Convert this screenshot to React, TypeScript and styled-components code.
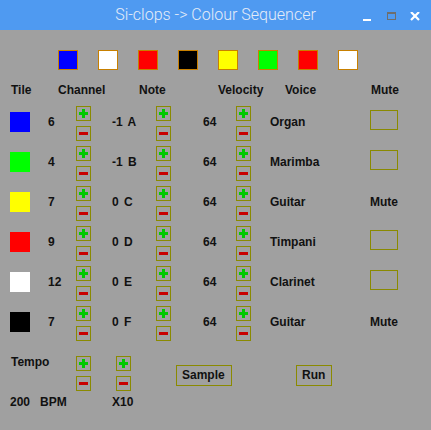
import { createGlobalStyle } from "styled-components";
import styled from "styled-components";

const palette = ["#0000ff", "#ffffff", "#ff0000", "#000000", "#ffff00", "#00ff00", "#ff0000", "#ffffff"];

const tracks = [
  { colour: "#0000ff", channel: 6, octave: -1, note: "A", velocity: 64, voice: "Organ", muted: false },
  { colour: "#00ff00", channel: 4, octave: -1, note: "B", velocity: 64, voice: "Marimba", muted: false },
  { colour: "#ffff00", channel: 7, octave: 0, note: "C", velocity: 64, voice: "Guitar", muted: true },
  { colour: "#ff0000", channel: 9, octave: 0, note: "D", velocity: 64, voice: "Timpani", muted: false },
  { colour: "#ffffff", channel: 12, octave: 0, note: "E", velocity: 64, voice: "Clarinet", muted: false },
  { colour: "#000000", channel: 7, octave: 0, note: "F", velocity: 64, voice: "Guitar", muted: true },
];

const GlobalStyle = createGlobalStyle`
  body {
    margin: 0;
    background: #a0a0a0;
    font-family: "Liberation Sans", Arial, sans-serif;
  }
`;

const PlusIcon = () => (
  <svg width="9" height="9" viewBox="0 0 9 9">
    <rect x="0" y="3" width="9" height="3" fill="#00c800" />
    <rect x="3" y="0" width="3" height="9" fill="#00c800" />
  </svg>
);

const MinusIcon = () => (
  <svg width="9" height="3" viewBox="0 0 9 3">
    <rect x="0" y="0" width="9" height="3" fill="#c80000" />
  </svg>
);

const Stepper = ({ shift }: { shift?: number }) => (
  <StepStack $shift={shift}>
    <StepButton>
      <PlusIcon />
    </StepButton>
    <StepButton>
      <MinusIcon />
    </StepButton>
  </StepStack>
);

export default function App() {
  return (
    <Window>
      <GlobalStyle />
      <TitleBar>
        <span />
        <Title>Si-clops -&gt; Colour Sequencer</Title>
        <Controls>
          <svg width="12" height="12" viewBox="0 0 12 12">
            <rect x="2" y="7" width="8" height="2" fill="#ffffff" />
          </svg>
          <svg width="12" height="12" viewBox="0 0 12 12">
            <rect x="2.5" y="0.5" width="8" height="7" fill="none" stroke="#6e6e6e" />
            <rect x="2" y="0" width="9" height="2" fill="#6e6e6e" />
          </svg>
          <svg width="12" height="12" viewBox="0 0 12 12">
            <path d="M2 0 L10 8 M10 0 L2 8" stroke="#ffffff" strokeWidth="2.2" />
          </svg>
        </Controls>
      </TitleBar>

      <Palette>
        {palette.map((c, i) => (
          <PaletteTile key={i} $colour={c} />
        ))}
      </Palette>

      <Header>
        <span>Tile</span>
        <span>Channel</span>
        <span>Note</span>
        <span>Velocity</span>
        <span>Voice</span>
        <span>Mute</span>
      </Header>

      {tracks.map((t, i) => (
        <Row key={i}>
          <Swatch $colour={t.colour} />
          <Value>{t.channel}</Value>
          <Stepper />
          <NoteValue>
            {t.octave} {t.note}
          </NoteValue>
          <Stepper />
          <Value>{t.velocity}</Value>
          <Stepper />
          <Value>{t.voice}</Value>
          {t.muted ? <Value>Mute</Value> : <MuteBox />}
        </Row>
      ))}

      <Footer>
        <TempoLabel>Tempo</TempoLabel>
        <Stepper />
        <Stepper shift={4} />
        <ActionButton>Sample</ActionButton>
        <ActionButton>Run</ActionButton>
        <BpmText>
          <span>200</span>
          <span>BPM</span>
        </BpmText>
        <span />
        <FootText>X10</FootText>
      </Footer>
    </Window>
  );
}

const Window = styled.div`
  width: 431px;
  height: 430px;
  background: #a0a0a0;
  color: #111111;
  font-size: 12px;
  font-weight: bold;
  overflow: hidden;
`;

const TitleBar = styled.div`
  height: 30px;
  background: #4f9af1;
  display: grid;
  grid-template-columns: 1fr auto 1fr;
  align-items: center;
`;

const Title = styled.div`
  font-family: Roboto, "Liberation Sans", sans-serif;
  font-weight: 300;
  font-size: 16px;
  color: #e4ecf8;
  line-height: 30px;
`;

const Controls = styled.div`
  display: flex;
  justify-content: flex-end;
  gap: 12px;
  padding: 6px 10px 0 0;
  align-self: start;
  margin-top: 6px;
`;

const Palette = styled.div`
  display: flex;
  gap: 20px;
  padding-left: 58px;
  margin-top: 20px;
`;

const PaletteTile = styled.div<{ $colour: string }>`
  width: 20px;
  height: 20px;
  box-sizing: border-box;
  border: 1px solid #c88000;
  background: ${(p) => p.$colour};
`;

const Header = styled.div`
  display: grid;
  grid-template-columns: 47px 81px 79px 67px 86px auto;
  padding-left: 11px;
  margin-top: 13px;
  line-height: 14px;
  margin-bottom: 9px;
`;

const Row = styled.div`
  display: grid;
  grid-template-columns: 38px 28px 36px 44px 47px 33px 34px 100px auto;
  align-items: start;
  padding-left: 10px;
  height: 40px;
`;

const Swatch = styled.div<{ $colour: string }>`
  width: 20px;
  height: 20px;
  margin-top: 6px;
  background: ${(p) => p.$colour};
`;

const Value = styled.div`
  margin-top: 6px;
  line-height: 20px;
  white-space: pre;
`;

const NoteValue = styled(Value)`
  word-spacing: 2px;
`;

const StepStack = styled.div<{ $shift?: number }>`
  display: flex;
  flex-direction: column;
  gap: 5px;
  margin-left: ${(p) => p.$shift ?? 0}px;
`;

const StepButton = styled.div`
  width: 15px;
  height: 15px;
  box-sizing: border-box;
  border: 1.5px solid #8a8a00;
  display: flex;
  align-items: center;
  justify-content: center;
`;

const MuteBox = styled.div`
  width: 28px;
  height: 20px;
  margin-top: 4px;
  box-sizing: border-box;
  border: 1.5px solid #8a8a00;
`;

const Footer = styled.div`
  display: grid;
  grid-template-columns: 66px 36px 64px 120px auto;
  align-items: start;
  row-gap: 4px;
  padding-left: 10px;
  margin-top: 10px;
`;

const TempoLabel = styled.div`
  line-height: 12px;
  padding-left: 1px;
`;

const ActionButton = styled.div`
  justify-self: start;
  margin-top: 9px;
  height: 21px;
  box-sizing: border-box;
  border: 1.5px solid #8a8a00;
  padding: 0 6px 0 5px;
  line-height: 18px;
`;

const BpmText = styled.div`
  display: flex;
  gap: 10px;
  line-height: 14px;
`;

const FootText = styled.div`
  line-height: 14px;
`;
